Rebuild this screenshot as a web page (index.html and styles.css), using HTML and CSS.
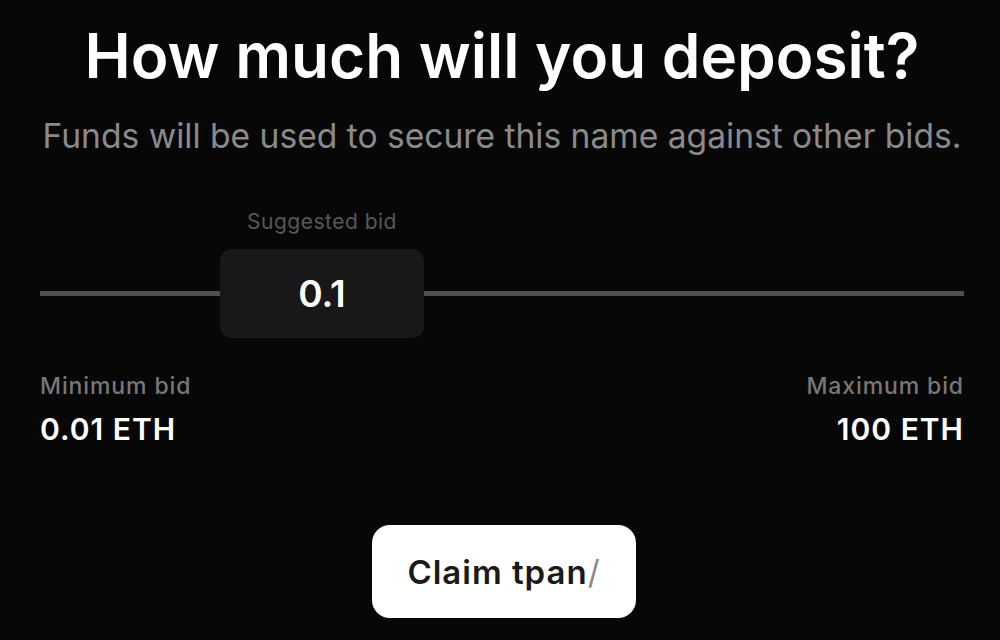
FILE: index.html
```html
<!DOCTYPE html>
<html lang="en">
  <head>
    <meta name="viewport" content="width=device-width, initial-scale=1.0" />
    <title>Deposit</title>
    <link rel="stylesheet" href="styles.css">
  </head>
  <body>
    <div class="container">
      <h1>How much will you deposit?</h1>
      <p class="subtitle">Funds will be used to secure this name against other bids.</p>

      <div class="slider">
        <div class="line line-left"></div>
        <div class="thumb">
          <span class="thumb-label">Suggested bid</span>
          <span class="thumb-value">0.1</span>
        </div>
        <div class="line line-right"></div>
      </div>

      <div class="limits">
        <div class="limit">
          <p>Minimum bid</p>
          <span>0.01 ETH</span>
        </div>
        <div class="limit limit-max">
          <p>Maximum bid</p>
          <span>100 ETH</span>
        </div>
      </div>

      <div class="actions">
        <button class="claim-btn">Claim tpan<span class="slash">/</span></button>
      </div>
    </div>
  </body>
</html>
```

FILE: styles.css
```css
* {
  padding: 0;
  margin: 0;
  box-sizing: border-box;
  font-family: "Inter", sans-serif;
}
body {
  background-color: #070707;
  color: #ffffff;
}
.container {
  padding: 18px 36px 0 40px;
}
h1 {
  text-align: center;
  font-size: 62px;
  font-weight: 600;
  line-height: 76px;
  white-space: nowrap;
}
.subtitle {
  text-align: center;
  font-size: 33.6px;
  color: #8a8a8a;
  margin-top: 22px;
  line-height: 40px;
  white-space: nowrap;
}
.slider {
  display: flex;
  align-items: center;
  margin-top: 93px;
}
.line {
  height: 5px;
  background-color: #505050;
}
.line-left {
  width: 180px;
}
.line-right {
  flex: 1;
}
.thumb {
  position: relative;
  width: 204px;
  height: 89px;
  background-color: #181818;
  border-radius: 12px;
  display: grid;
  place-items: center;
}
.thumb-label {
  position: absolute;
  bottom: 100%;
  left: -20px;
  right: -20px;
  margin-bottom: 15px;
  text-align: center;
  font-size: 21px;
  letter-spacing: 0.5px;
  color: #585858;
}
.thumb-value {
  font-size: 37px;
  font-weight: 600;
}
.limits {
  display: flex;
  justify-content: space-between;
  margin-top: 34px;
}
.limit p {
  font-size: 23px;
  color: #777777;
  font-weight: 500;
  letter-spacing: 0.9px;
  line-height: 28px;
}
.limit span {
  display: block;
  font-size: 30px;
  font-weight: 600;
  letter-spacing: 1px;
  margin-top: 11px;
}
.limit-max {
  text-align: right;
}
.actions {
  display: flex;
  justify-content: center;
  margin-top: 78px;
}
.claim-btn {
  width: 264px;
  height: 93px;
  border: none;
  border-radius: 18px;
  background-color: #ffffff;
  color: #1a1a1a;
  font-size: 33px;
  font-weight: 600;
  letter-spacing: 1px;
  margin-left: 4px;
}
.slash {
  color: #8a8a8a;
  font-weight: 400;
}
```
